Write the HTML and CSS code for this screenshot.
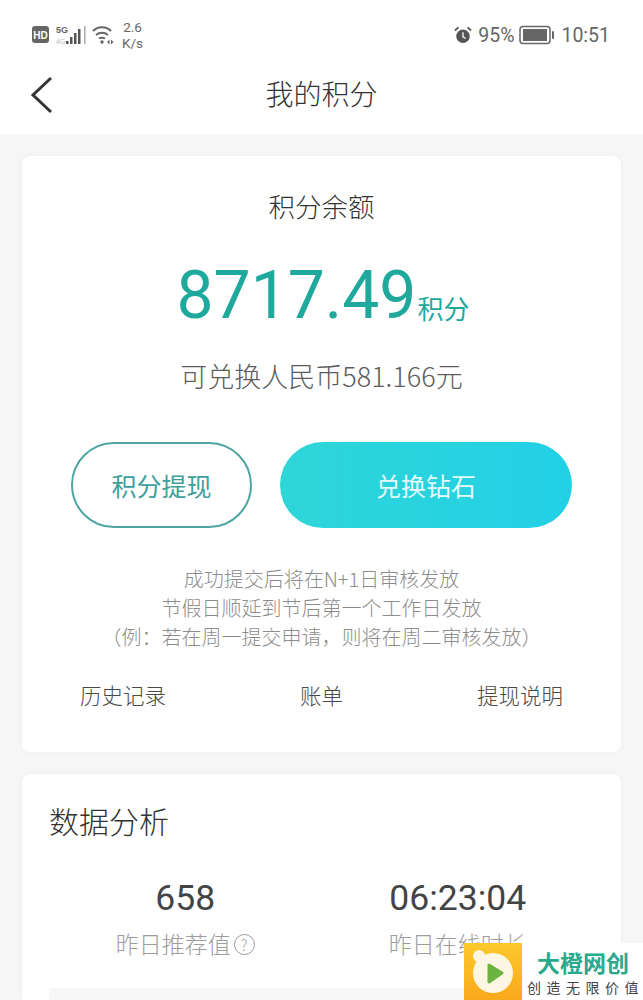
FILE: index.html
```html
<!DOCTYPE html>
<html>
<head>
  <meta charset="UTF-8">
  <link rel="stylesheet" href="styles.css">
</head>
<body>
  <div class="top">
    <div class="statusbar">
      <div class="status-left">
        <svg class="st-hd" width="17" height="18" viewBox="0 0 17 18"><rect width="17" height="17" rx="3" fill="#666"/><text x="8.5" y="12.5" class="hd-text">HD</text></svg>
        <svg class="st-signal" width="30" height="20" viewBox="0 0 30 20">
          <text x="0" y="8" class="net-a">5G</text>
          <text x="0" y="18.5" class="net-b">4G</text>
          <rect x="10" y="16" width="2.5" height="3" fill="#555"/>
          <rect x="14" y="12" width="2.5" height="7" fill="#555"/>
          <rect x="18" y="8" width="2.5" height="11" fill="#555"/>
          <rect x="22" y="4" width="2.5" height="15" fill="#555"/>
          <rect x="28" y="1" width="1.5" height="18" fill="#aaa"/>
        </svg>
        <svg class="st-wifi" width="22" height="20" viewBox="0 0 22 20" fill="none" stroke="#666" stroke-width="2">
          <path d="M1 6C6 1 14 1 19 6"/>
          <path d="M4 10C7.5 7 12.5 7 16 10"/>
          <path d="M7 13.5C8.5 12.4 11.5 12.4 13 13.5"/>
          <circle cx="10" cy="17" r="1.7" fill="#666" stroke="none"/>
          <path d="M17.5 14.5l-2.5 2.5 2.5 2.5zM19 14.5l2.5 2.5-2.5 2.5z" fill="#666" stroke="none"/>
        </svg>
        <div class="speed">2.6<br>K/s</div>
      </div>
      <div class="status-right">
        <svg width="18" height="18" viewBox="0 0 20 20"><circle cx="10" cy="11.5" r="7.5" fill="#555"/><path d="M10 7v5l3 2" fill="none" stroke="#fff" stroke-width="1.4"/><path d="M1 5l4-3.5M19 5l-4-3.5" stroke="#555" stroke-width="2"/></svg>
        <span class="st-text st-pct">95%</span>
        <svg class="st-batt" width="36" height="20" viewBox="0 0 36 20"><rect x="1" y="1.5" width="30" height="17" rx="3" fill="none" stroke="#666" stroke-width="1.5"/><rect x="4" y="4" width="24" height="12" fill="#666"/><rect x="33" y="6" width="2" height="8" rx="1" fill="#666"/></svg>
        <span class="st-text">10:51</span>
      </div>
    </div>
    <div class="navbar">
      <svg class="back" width="26" height="38" viewBox="0 0 26 38" fill="none" stroke="#333" stroke-width="3"><path d="M23 2L5 19l18 17"/></svg>
      <div class="nav-title">我的积分</div>
    </div>
  </div>

  <div class="page">
    <div class="card balance">
      <div class="balance-label">积分余额</div>
      <div class="balance-value"><span class="num">8717.49</span><span class="unit">积分</span></div>
      <div class="balance-rmb">可兑换人民币581.166元</div>
      <div class="btns">
        <div class="btn btn-outline">积分提现</div>
        <div class="btn btn-fill">兑换钻石</div>
      </div>
      <div class="notes">
        <div>成功提交后将在N+1日审核发放</div>
        <div>节假日顺延到节后第一个工作日发放</div>
        <div>（例：若在周一提交申请，则将在周二审核发放）</div>
      </div>
      <div class="links">
        <span>历史记录</span>
        <span>账单</span>
        <span>提现说明</span>
      </div>
    </div>

    <div class="card data">
      <div class="data-title">数据分析</div>
      <div class="stats">
        <div class="stat">
          <div class="stat-num">658</div>
          <div class="stat-label">昨日推荐值<span class="help">?</span></div>
        </div>
        <div class="stat">
          <div class="stat-num">06:23:04</div>
          <div class="stat-label">昨日在线时长</div>
        </div>
      </div>
      <div class="data-bar"></div>
    </div>
  </div>

  <div class="watermark">
    <div class="wm-logo">
      <svg width="58" height="57" viewBox="0 0 58 57">
        <circle cx="29" cy="30" r="20" fill="#fdf6e3"/>
        <circle cx="15" cy="13" r="6" fill="#fdf6e3"/>
        <path d="M25 22L38 30L25 39z" fill="#6cb33f" stroke="#6cb33f" stroke-width="3" stroke-linejoin="round"/>
      </svg>
    </div>
    <div class="wm-text">
      <div class="wm-name">大橙网创</div>
      <div class="wm-slogan">创造无限价值</div>
    </div>
  </div>
</body>
</html>
```

FILE: styles.css
```css
* {
  margin: 0;
  padding: 0;
  box-sizing: border-box;
}

html, body {
  height: 1000px;
  overflow: hidden;
}

body {
  position: relative;
  width: 643px;
  background: #f6f6f6;
  font-family: "Noto Sans CJK SC", "Noto Sans", sans-serif;
  font-weight: 300;
  color: #333;
}

.top {
  background: #fff;
  height: 134px;
}

.statusbar {
  height: 68px;
  padding: 20px 33px 0 32px;
  display: flex;
  justify-content: space-between;
  align-items: flex-start;
}

.status-left,
.status-right {
  display: flex;
  align-items: center;
  height: 30px;
}

.st-hd { margin-right: 7px; }
.st-wifi { margin-left: 6px; margin-right: 8px; }

.hd-text {
  font-family: "Liberation Sans", sans-serif;
  font-size: 10px;
  font-weight: 700;
  fill: #fff;
  text-anchor: middle;
}

.net-a {
  font-family: "Liberation Sans", sans-serif;
  font-size: 9px;
  font-weight: 700;
  fill: #666;
}

.net-b {
  font-family: "Liberation Sans", sans-serif;
  font-size: 7px;
  fill: #bbb;
}

.speed {
  font-family: Roboto, sans-serif;
  font-size: 13.5px;
  font-weight: 400;
  line-height: 16px;
  color: #666;
  text-align: center;
}

.st-text {
  font-family: Roboto, sans-serif;
  font-size: 19.5px;
  font-weight: 400;
  color: #666;
}

.st-pct { margin: 0 5px 0 6px; }
.st-batt { margin-right: 6px; }

.navbar {
  position: relative;
  height: 52px;
  display: flex;
  justify-content: center;
}

.back {
  position: absolute;
  left: 28px;
  top: 8px;
}

.nav-title {
  font-size: 28px;
  line-height: 50px;
}

.page {
  padding: 22px 22px 0;
}

.card {
  background: #fff;
  border-radius: 8px;
  box-shadow: 0 0 6px rgba(0, 0, 0, 0.03);
}

.balance {
  height: 596px;
  padding-top: 31px;
  text-align: center;
}

.balance-label {
  font-size: 26.5px;
  line-height: 38px;
}

.balance-value {
  margin-top: 31px;
  height: 80px;
  display: flex;
  justify-content: center;
  align-items: flex-end;
  padding-left: 3px;
  color: #1fa99d;
}

.num {
  font-family: Roboto, sans-serif;
  font-size: 66px;
  font-weight: 400;
  line-height: 80px;
}

.unit {
  font-size: 26px;
  font-weight: 400;
  line-height: 38px;
  margin-bottom: 9px;
  margin-left: 1px;
}

.balance-rmb {
  margin-top: 21px;
  font-size: 27px;
  line-height: 38px;
  color: #5c5c5c;
}

.btns {
  margin-top: 47px;
  padding: 0 49px;
  display: flex;
  gap: 28px;
}

.btn {
  height: 86px;
  border-radius: 43px;
  font-size: 25px;
  font-weight: 400;
  display: flex;
  align-items: center;
  justify-content: center;
}

.btn-outline {
  width: 181px;
  border: 2px solid #4ea6a4;
  color: #3c9f9c;
}

.btn-fill {
  width: 292px;
  background: linear-gradient(90deg, #2fd6d8, #22d0e6);
  color: #e4fbfb;
}

.notes {
  margin-top: 36px;
  font-size: 20px;
  line-height: 29px;
  color: #8c8c8c;
}

.links {
  margin-top: 29px;
  padding: 0 58px;
  display: flex;
  justify-content: space-between;
  font-size: 21.5px;
  line-height: 30px;
  color: #4a4a4a;
}

.data {
  margin-top: 22px;
  height: 226px;
  padding: 25px 27px 0;
  overflow: hidden;
  border-radius: 8px 8px 0 0;
}

.data-title {
  font-size: 30px;
  line-height: 42px;
}

.stats {
  margin-top: 35px;
  display: flex;
}

.stat {
  width: 273px;
  text-align: center;
}

.stat-num {
  font-family: Roboto, sans-serif;
  font-size: 35.5px;
  font-weight: 400;
  line-height: 44px;
  color: #444;
}

.stat-label {
  margin-top: 6px;
  font-size: 23px;
  line-height: 34px;
  color: #9c9c9c;
}

.help {
  display: inline-block;
  width: 21px;
  height: 21px;
  margin-left: 3px;
  border: 1px solid #999;
  border-radius: 50%;
  font-size: 15px;
  line-height: 19px;
  vertical-align: 2px;
}

.data-bar {
  margin-top: 28px;
  height: 12px;
  background: #f7f7f7;
}

.watermark {
  position: absolute;
  right: 0;
  bottom: 0;
  width: 179px;
  height: 57px;
  background: #fff;
  display: flex;
}

.wm-logo {
  width: 58px;
  height: 57px;
  background: linear-gradient(180deg, #fcc92c, #f9a91c);
}

.wm-text {
  flex: 1;
  text-align: center;
}

.wm-name {
  margin-top: 3px;
  font-size: 23px;
  font-weight: 700;
  line-height: 32px;
  color: #2aa98c;
}

.wm-slogan {
  font-size: 14px;
  font-weight: 400;
  line-height: 18px;
  letter-spacing: 5.5px;
  color: #444;
  padding-left: 5px;
  white-space: nowrap;
}
```
